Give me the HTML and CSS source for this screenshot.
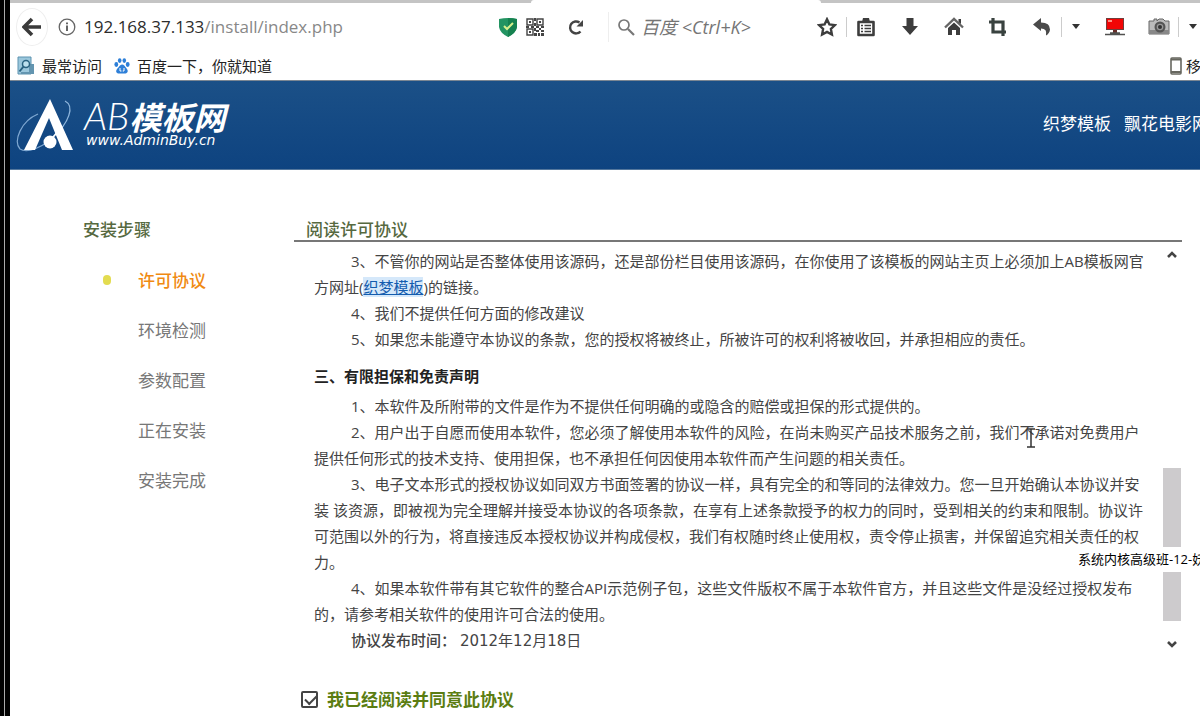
FILE: index.html
```html
<!DOCTYPE html>
<html lang="zh-CN">
<head>
<meta charset="utf-8">
<title>阅读许可协议</title>
<link rel="stylesheet" href="styles.css">
</head>
<body>
<div class="window">
  <div class="tabstrip"><span class="tab"></span></div>
  <div class="toolbar">
    <button class="back" aria-label="后退"><svg width="20" height="20" viewBox="0 0 20 20"><path d="M10 2 2 10l8 8M3 10h16" fill="none" stroke="#3a3a3a" stroke-width="3.6"/></svg></button>
    <form class="address">
      <svg width="18" height="18" viewBox="0 0 18 18"><circle cx="9" cy="9" r="7.8" fill="none" stroke="#666" stroke-width="1.3"/><path d="M9 7.5v5.5M9 4.4v1.8" stroke="#555" stroke-width="1.8"/></svg>
      <a class="url" href="#"><b>192.168.37.133</b>/install/index.php</a>
      <svg class="shield" width="20" height="20" viewBox="0 0 20 20"><path d="M1 2q9-2 18 0v8q-1 6-9 10Q2 16 1 10z" fill="#239462"/><path d="M10 1q5 0 9 1v8q-1 6-9 10z" fill="#168250"/><path d="m6 9 3 3 6-6" fill="none" stroke="#d8f08c" stroke-width="2"/></svg>
      <svg width="18" height="18" viewBox="0 0 18 18"><path d="M1 1h6v6H1zM11 1h6v6h-6zM1 11h6v6H1z" fill="none" stroke="#444" stroke-width="1.4"/><path d="M3 3h2v2H3zM13 3h2v2h-2zM3 13h2v2H3zM8 0h2v3H8zM8 5h2v3H8zM0 8h3v2H0zM5 8h3v2H5zM10 8h3v2h-3zM15 8h3v2h-3zM8 10h2v3H8zM10 12h3v2h-3zM13 10h2v2h-2zM15 12h3v2h-3zM8 15h3v3H8zM12 15h2v3h-2zM15 15h3v3h-3z" fill="#444"/></svg>
      <button type="button" class="reload" aria-label="刷新"><svg width="16" height="16" viewBox="0 0 16 16"><path d="M11.500 3.500A6 6 0 1 0 12.500 12.500" fill="none" stroke="#444" stroke-width="2.400"/><path d="M15 1v6.500H8.500z" fill="#444"/></svg></button>
    </form>
    <form class="search">
      <svg width="18" height="18" viewBox="0 0 18 18"><circle cx="7" cy="7" r="5" fill="none" stroke="#777" stroke-width="1.700"/><path d="m11 11 6 6" stroke="#777" stroke-width="2.200"/></svg>
      <input type="text" aria-label="搜索" placeholder="百度 &lt;Ctrl+K&gt;">
    </form>
    <div class="tools">
      <button aria-label="收藏"><svg width="20" height="20" viewBox="0 0 20 20"><path d="m10 2.300 2.400 5.100 5.600.7-4.100 3.900 1 5.600-4.900-2.700-4.900 2.700 1-5.600L2 8.100l5.600-.7z" fill="none" stroke="#3d3d3d" stroke-width="2.400"/></svg></button>
      <i class="rule"></i>
      <button aria-label="书签"><svg width="20" height="20" viewBox="0 0 20 20"><path d="M2.500 5h15v13h-15z" fill="none" stroke="#3d3d3d" stroke-width="2.600" stroke-linejoin="round"/><path d="M6 5l1-4h6l1 4z" fill="#3d3d3d"/><path d="M5 8.500h2M8.500 8.500H15M5 11.500h2M8.500 11.500H15M5 14.500h2M8.500 14.500H15" stroke="#3d3d3d" stroke-width="1.700"/></svg></button>
      <button aria-label="下载"><svg width="20" height="20" viewBox="0 0 20 20"><path d="M6.500 1h7v8H18l-8 9-8-9h4.500z" fill="#3d3d3d"/></svg></button>
      <button aria-label="主页"><svg width="20" height="20" viewBox="0 0 20 20"><path d="m1 10.500 9-8.500 9 8.500" fill="none" stroke="#666" stroke-width="2.400"/><path d="M14.500 2H17v5l-2.500-2zM4 11l6-5.500 6 5.500v7h-4v-5H8v5H4z" fill="#3d3d3d"/></svg></button>
      <button aria-label="截图"><svg width="20" height="20" viewBox="0 0 20 20"><path d="M5 1v14h13M1 5h14v14" fill="none" stroke="#39423f" stroke-width="3.200"/></svg></button>
      <button aria-label="撤销"><svg width="20" height="20" viewBox="0 0 20 20"><path d="M1 7.500 9 1v4.500q9 0 9 7-0.500 4-4 6 1.500-7-5-7V14z" fill="#4a4a4a"/></svg></button>
      <i class="rule"></i>
      <button class="more" aria-label="更多"><svg width="10" height="8" viewBox="0 0 10 8"><path d="M1 1h8L5 6z" fill="#333"/></svg></button>
      <button aria-label="屏幕"><svg width="20" height="20" viewBox="0 0 20 20"><path d="M1 1h18v12H1z" fill="#713d3b"/><path d="M2 2h16v10H2z" fill="#f20505"/><path d="M3 3h4v2H3z" fill="#ff8f83"/><path d="M8 13h4v3H8z" fill="#662d29"/><path d="M0 17.500h20M5 16h10" stroke="#51514f" stroke-width="1.500"/></svg></button>
      <button aria-label="相机"><svg width="22" height="20" viewBox="0 0 22 20"><path d="M1 4h5V2h3v2l2-2h4l2 2h4v13H1z" fill="#bbb" stroke="#666"/><path d="M1 13h20v4H1z" fill="#888"/><circle cx="12" cy="10" r="5.500" fill="#555"/><circle cx="12" cy="10" r="3.300" fill="#999"/><circle cx="12" cy="10" r="2" fill="#333"/></svg></button>
      <i class="rule"></i>
      <button class="more" aria-label="更多"><svg width="10" height="8" viewBox="0 0 10 8"><path d="M1 1h8L5 6z" fill="#333"/></svg></button>
    </div>
  </div>
  <nav class="bookmarks">
    <a href="#"><svg width="18" height="20" viewBox="0 0 18 20"><path d="M1 1h13v17H1z" fill="#9bc7dc" stroke="#5c93b0"/><path d="M12 8h5v10H4v-2h8z" fill="#6395b0"/><circle cx="9" cy="8" r="3.500" fill="#bce0ee" stroke="#28617f" stroke-width="1.500"/><path d="m6.500 10.500-4 5" stroke="#28617f" stroke-width="2"/></svg>最常访问</a>
    <a href="#"><svg width="16" height="16" viewBox="0 0 16 16"><g fill="#2d7fd8"><ellipse cx="2.300" cy="6.500" rx="1.900" ry="2.400"/><ellipse cx="5.700" cy="2.600" rx="1.800" ry="2.400"/><ellipse cx="10.300" cy="2.600" rx="1.800" ry="2.400"/><ellipse cx="13.700" cy="6.500" rx="1.900" ry="2.400"/><path d="M8 6.500c2 0 3 2 5 4.500 2 3-.5 5-3 4.500H6C3 16 1 14 3 11c2-2 3-4.500 5-4.500z"/></g><path d="M6 10v3h1.500M10 10v3H8.700" fill="none" stroke="#fff"/></svg>百度一下，你就知道</a>
    <a class="mobile" href="#"><svg width="12" height="18" viewBox="0 0 12 18"><rect x="1" y="1" width="10" height="16" rx="1" fill="#fff" stroke="#67675f" stroke-width="1.600"/><path d="M1 2.500h10M1 15h10" stroke="#67675f" stroke-width="2"/></svg>移</a>
  </nav>
  <header class="banner">
    <a class="logo" href="#">
      <svg width="60" height="54" viewBox="0 0 60 54"><path d="M49 2c10 5 4 22-12 36" fill="none" stroke="#8fb6dc" stroke-width="1.300"/><path d="M22 15C5 22-3 42 4 50c6 4 17 0 28-7" fill="none" stroke="#7fa8d2" stroke-width="1.200"/><path d="M34 0 57 51H46L33 19 19 51H8z" fill="#fff"/><circle cx="34" cy="43" r="6.500" fill="#fff"/><path d="m34 42 8-10" stroke="#fff" stroke-width="1.500"/></svg>
      <span class="brand"><span class="name"><span class="ab">AB</span>模板网</span><span class="site">www.AdminBuy.cn</span></span>
    </a>
    <nav class="links"><a href="#">织梦模板</a><a href="#">飘花电影网</a></nav>
  </header>
  <main class="content">
    <aside class="steps">
      <h2>安装步骤</h2>
      <ol>
        <li class="current">许可协议</li>
        <li>环境检测</li>
        <li>参数配置</li>
        <li>正在安装</li>
        <li>安装完成</li>
      </ol>
    </aside>
    <section class="agreement">
      <h2>阅读许可协议</h2>
      <div class="reader">
        <div class="license">
          <p>3、不管你的网站是否整体使用该源码，还是部份栏目使用该源码，在你使用了该模板的网站主页上必须加上AB模板网官<br>方网址(<a href="#">织梦模板</a>)的链接。</p>
          <p>4、我们不提供任何方面的修改建议</p>
          <p>5、如果您未能遵守本协议的条款，您的授权将被终止，所被许可的权利将被收回，并承担相应的责任。</p>
          <h3>三、有限担保和免责声明</h3>
          <p>1、本软件及所附带的文件是作为不提供任何明确的或隐含的赔偿或担保的形式提供的。</p>
          <p>2、用户出于自愿而使用本软件，您必须了解使用本软件的风险，在尚未购买产品技术服务之前，我们不承诺对免费用户<br>提供任何形式的技术支持、使用担保，也不承担任何因使用本软件而产生问题的相关责任。</p>
          <p>3、电子文本形式的授权协议如同双方书面签署的协议一样，具有完全的和等同的法律效力。您一旦开始确认本协议并安<br>装 该资源，即被视为完全理解并接受本协议的各项条款，在享有上述条款授予的权力的同时，受到相关的约束和限制。协议许<br>可范围以外的行为，将直接违反本授权协议并构成侵权，我们有权随时终止使用权，责令停止损害，并保留追究相关责任的权<br>力。</p>
          <p>4、如果本软件带有其它软件的整合API示范例子包，这些文件版权不属于本软件官方，并且这些文件是没经过授权发布<br>的，请参考相关软件的使用许可合法的使用。</p>
          <p><b>协议发布时间：</b> <time datetime="2012-12-18">2012年12月18日</time></p>
        </div>
        <div class="scroll">
          <button aria-label="向上"><svg width="12" height="10" viewBox="0 0 12 10"><path d="m2 7 4-4 4 4" fill="none" stroke="#444" stroke-width="2.600"/></svg></button>
          <div class="track"><span class="thumb"></span></div>
          <button aria-label="向下"><svg width="12" height="10" viewBox="0 0 12 10"><path d="m2 3 4 4 4-4" fill="none" stroke="#444" stroke-width="2.600"/></svg></button>
        </div>
      </div>
      <label class="agree"><input type="checkbox" checked>我已经阅读并同意此协议</label>
    </section>
  </main>
  <div class="ticker">系统内核高级班-12-妖</div>
  <svg class="cursor" width="10" height="20" viewBox="0 0 10 20"><path d="M1 1h8M1 19h8M5 1v18" stroke="#333" stroke-width="1.500"/></svg>
</div>
</body>
</html>
```

FILE: styles.css
```css
* { box-sizing: border-box; }
body { margin: 0; background: #fff; font-family: "Noto Sans CJK SC", sans-serif; overflow: hidden; }
button { display: flex; align-items: center; justify-content: center; padding: 0; border: 0; background: none; }
a { color: inherit; text-decoration: none; }
h2, h3, p, ol { margin: 0; padding: 0; }
svg { flex: none; }

.window { position: relative; min-height: 100vh; border-left: 4px solid #000; overflow: hidden; }
.window::before { content: ""; position: absolute; inset: 0 auto 0 0; width: 5px; border-left: 1px solid #aaa; background: #000; z-index: 2; }

.tabstrip { height: 3px; padding-left: 527px; background: #c4c4c4; }
.tab { display: block; width: 290px; height: 3px; background: #fff; border-radius: 4px 4px 0 0; }

.toolbar { display: flex; align-items: center; height: 48px; padding-left: 12px; }
.back { width: 32px; height: 38px; flex: none; border-radius: 50%; border: 1px solid #eee; }
.address { display: flex; align-items: center; width: 560px; flex: none; padding-left: 10px; }
.url { margin-left: 8px; font: 17px/26px "Open Sans", sans-serif; color: #888; white-space: nowrap; }
.url b { font-weight: 400; color: #2c2c2c; }
.shield { margin: 0 8px 0 auto; }
.reload { width: 36px; height: 26px; margin: 0 14px; }
.search { display: flex; align-items: center; gap: 6px; width: 200px; flex: none; height: 30px; padding-left: 8px; border-left: 1px solid #eee; }
.search input { width: 150px; padding: 0; border: 0; outline: 0; font: italic 18px "Open Sans", "Noto Sans CJK SC", sans-serif; }
.search input::placeholder { color: #757575; opacity: 1; }
.tools { display: flex; align-items: center; gap: 12px; margin-left: 3px; }
.tools button { width: 32px; height: 30px; flex: none; }
.tools .more { width: 22px; }
.rule { width: 1px; height: 20px; flex: none; margin: 0 -9px; background: #ccc; }

.bookmarks { display: flex; align-items: center; gap: 12px; height: 29px; padding-left: 13px; font-size: 15px; line-height: 24px; color: #222; }
.bookmarks a { display: flex; align-items: center; gap: 7px; white-space: nowrap; }
.bookmarks .mobile { gap: 4px; width: 30px; margin-left: auto; }

.banner { display: flex; justify-content: space-between; height: 90px; padding: 18px 0 0 12px; border-top: 1px solid #7c8793; border-bottom: 1px solid #54779d; background: linear-gradient(#1b5087, #0e4380); color: #fff; }
.logo { display: flex; gap: 8px; }
.brand { display: flex; flex-direction: column; }
.name { font: italic 700 32px/32px "Noto Sans CJK SC", sans-serif; white-space: nowrap; }
.ab { font-family: Lato, sans-serif; font-weight: 300; font-size: 38px; }
.site { padding-left: 2px; font: italic 14px/16px "DejaVu Sans", sans-serif; }
.links { display: flex; gap: 13px; width: 157px; padding-top: 11px; font-size: 17px; line-height: 26px; white-space: nowrap; }

.content { display: flex; padding: 46px 18px 0 79px; }
.steps { width: 211px; flex: none; }
h2 { font-size: 17px; line-height: 26px; font-weight: 500; color: #56693f; }
.steps ol { padding-top: 13px; list-style: none; }
.steps li { height: 50px; padding-left: 55px; font-size: 17px; line-height: 50px; color: #777; }
.steps .current { position: relative; color: #f08a12; font-weight: 500; }
.current::before { content: ""; position: absolute; left: 20px; top: 20px; width: 8px; height: 10px; border-radius: 4px; background: #e3dc50; }
.agreement { flex: 1; min-width: 0; }
.agreement h2 { height: 26px; padding-left: 12px; border-bottom: 2px solid #777; }
.reader { display: flex; justify-content: space-between; padding-top: 6px; }
.license { padding-left: 20px; font-family: "Open Sans", "Noto Sans CJK SC", sans-serif; font-size: 15px; line-height: 26px; color: #444; white-space: nowrap; }
.license p { text-indent: 37px; }
.license p b { font-weight: 500; }
.license time { font-family: "DejaVu Sans", "Noto Sans CJK SC", sans-serif; }
.license a { color: #145cae; text-decoration: underline; background: #d5e8fa; }
.license h3 { margin: 11px 0 4px; font-size: 15px; line-height: 26px; color: #222; }
.scroll { display: flex; flex-direction: column; width: 20px; flex: none; margin-bottom: 3px; }
.scroll button { height: 14px; }
.track { display: flex; flex: 1; padding-top: 206px; }
.thumb { width: 18px; height: 153px; margin: 0 auto; background: #cdcbcd; }
.agree { display: flex; align-items: center; gap: 9px; padding: 32px 0 0 7px; font-size: 17px; line-height: 26px; font-weight: 700; color: #5b7d12; }
.agree input { appearance: none; width: 17px; height: 17px; margin: 0; border: 2px solid #444; border-radius: 2px; background: #fff; }
.agree input:checked::before { content: ""; display: block; width: 10px; height: 5px; margin: 2px 0 0 2px; border: solid #444; border-width: 0 0 2px 2px; transform: rotate(-45deg); }

.ticker { position: absolute; top: 547px; right: 0; width: 122px; height: 25px; font: 13px/25px "Open Sans", "Noto Sans CJK SC", sans-serif; color: #000; background: linear-gradient(90deg, transparent 84px, #fff 84px); white-space: nowrap; }
.cursor { position: absolute; left: 1022px; top: 428px; }
```
